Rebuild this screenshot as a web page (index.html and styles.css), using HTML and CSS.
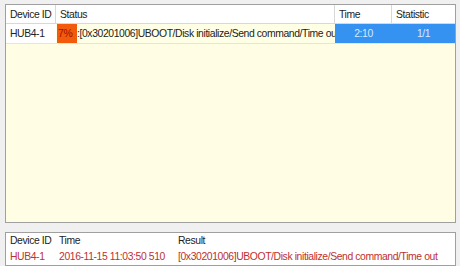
FILE: index.html
```html
<!DOCTYPE html>
<html lang="en">
<head>
    <meta charset="UTF-8">
    <title>Device Status</title>
    <link rel="stylesheet" href="styles.css">
</head>
<body>
    <div class="panel status-panel">
        <div class="row head">
            <div class="cell c-id">Device ID</div>
            <div class="cell c-status">Status</div>
            <div class="cell c-time">Time</div>
            <div class="cell c-stat">Statistic</div>
        </div>
        <div class="row">
            <div class="cell c-id">HUB4-1</div>
            <div class="cell c-status status-val"><span class="pct">7%</span><span class="msg">:[0x30201006]UBOOT/Disk initialize/Send command/Time out</span></div>
            <div class="cell c-time sel">2:10</div>
            <div class="cell c-stat sel">1/1</div>
        </div>
    </div>
    <div class="panel log-panel">
        <div class="row head">
            <div class="cell l-id">Device ID</div>
            <div class="cell l-time">Time</div>
            <div class="cell l-res">Result</div>
        </div>
        <div class="row log-row">
            <div class="cell l-id">HUB4-1</div>
            <div class="cell l-time">2016-11-15 11:03:50 510</div>
            <div class="cell l-res">[0x30201006]UBOOT/Disk initialize/Send command/Time out</div>
        </div>
    </div>
</body>
</html>
```

FILE: styles.css
```css
body {
    margin: 0;
    padding: 4px 4px 0 5px;
    background-color: #f0f0f0;
    font-family: "Liberation Sans", Arial, sans-serif;
    font-size: 10.4px;
    letter-spacing: -0.4px;
    color: #222;
    height: 266px;
    box-sizing: border-box;
    display: flex;
    flex-direction: column;
    gap: 9px;
}
.panel {
    border: 1px solid #a0a0a0;
    overflow: hidden;
}
.status-panel {
    height: 217px;
    background-color: #fffde3;
}
.log-panel {
    flex: 1;
    background-color: #fff;
}
.row {
    display: flex;
}
.cell {
    box-sizing: border-box;
    padding: 0 4px;
    white-space: nowrap;
    overflow: hidden;
}
.head .cell {
    background-color: #fff;
    border-right: 1px solid #d8d8d8;
    border-bottom: 1px solid #d8d8d8;
    height: 19px;
    line-height: 19px;
}
.head .cell:last-child {
    border-right: none;
}
.status-panel .row:not(.head) .cell {
    height: 20px;
    line-height: 20px;
    border-bottom: 1px solid #e4e4e4;
}
.c-id { width: 50px; background-color: #fff; }
.c-status { width: 279px; }
.c-time { width: 57px; }
.c-stat { flex: 1; }
.status-val {
    background-color: #ffffe6;
    padding: 0 0 0 1px;
    display: flex;
}
.pct {
    background-color: #f25a0c;
    color: #a01000;
    width: 19px;
    flex-shrink: 0;
    padding-left: 1px;
}
.sel {
    background-color: #3592f0;
    color: #d8e8ff;
    text-align: center;
}
.log-panel .head .cell {
    height: 16px;
    line-height: 16px;
    border-right: none;
    border-bottom: none;
}
.log-row .cell {
    color: #c03030;
    height: 15px;
    line-height: 15px;
}
.l-id { width: 49px; }
.l-time { width: 119px; }
.l-res { flex: 1; }
```
